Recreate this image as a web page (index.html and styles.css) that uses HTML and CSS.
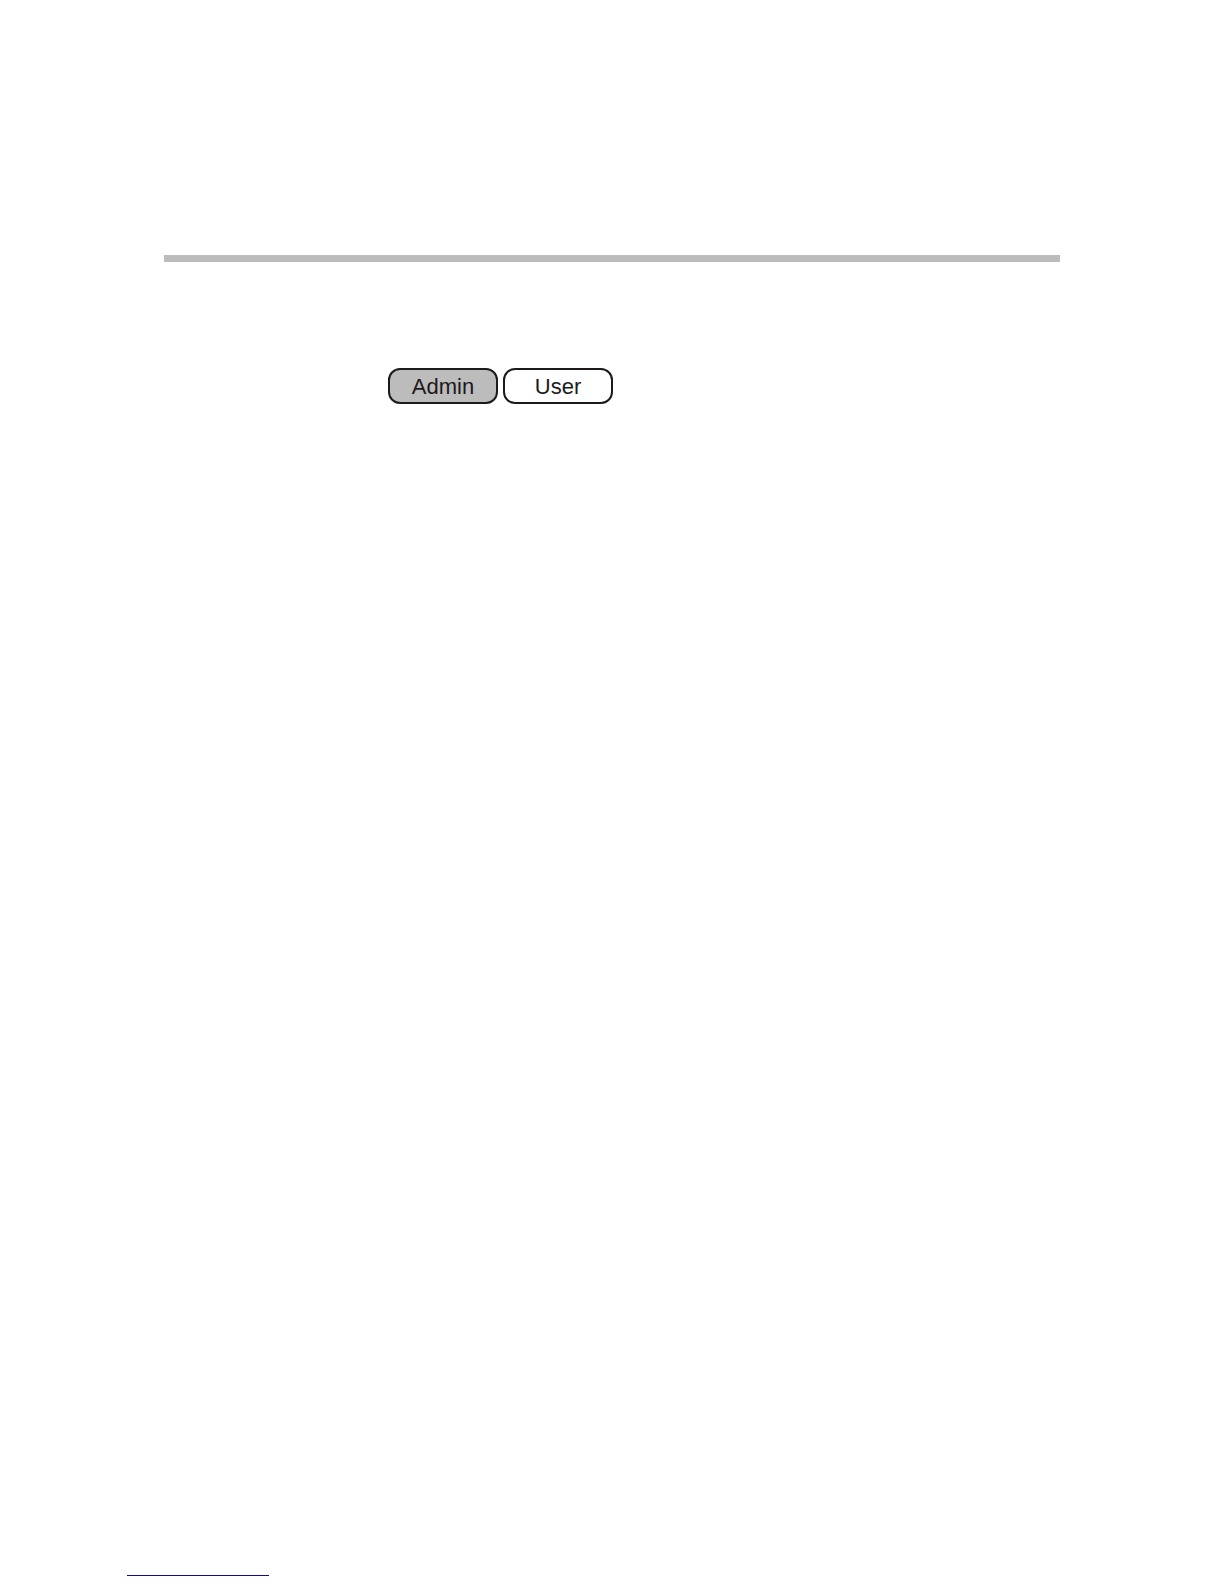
FILE: index.html
```html
<!DOCTYPE html>
<html lang="en">
<head>
<meta charset="utf-8">
<meta name="viewport" content="width=device-width, initial-scale=1">
<title>Admin / User</title>
<link rel="stylesheet" href="styles.css">
</head>
<body>
<main class="content">
  <hr class="header-rule">
  <div class="roles">
    <button type="button" class="role role-active">Admin</button>
    <button type="button" class="role">User</button>
  </div>
</main>
<footer class="footer">
  <hr class="footer-rule">
</footer>
</body>
</html>
```

FILE: styles.css
```css
* {
  box-sizing: border-box;
}

body {
  display: flex;
  flex-direction: column;
  justify-content: space-between;
  min-height: 100vh;
  margin: 0;
  background: #fff;
  color: #1c1a1b;
  font-family: "Liberation Sans", Arial, sans-serif;
}

.content {
  padding: 255px 164px 0;
}

.header-rule {
  height: 7px;
  margin: 0;
  border: 0;
  background: #bcbcbc;
}

.roles {
  display: flex;
  gap: 5px;
  margin-top: 106px;
  padding-left: 224px;
}

.role {
  width: 110px;
  height: 36px;
  padding: 2px 0 0;
  border: 2px solid #1c1a1b;
  border-radius: 12px;
  background: #fff;
  color: inherit;
  font-family: inherit;
  font-size: 22px;
  line-height: 30px;
}

.role-active {
  background: #bcbcbc;
}

.footer {
  padding: 0 127px 8px;
}

.footer-rule {
  width: 142px;
  height: 1px;
  margin: 0;
  border: 0;
  background: #0c0c96;
}
```
